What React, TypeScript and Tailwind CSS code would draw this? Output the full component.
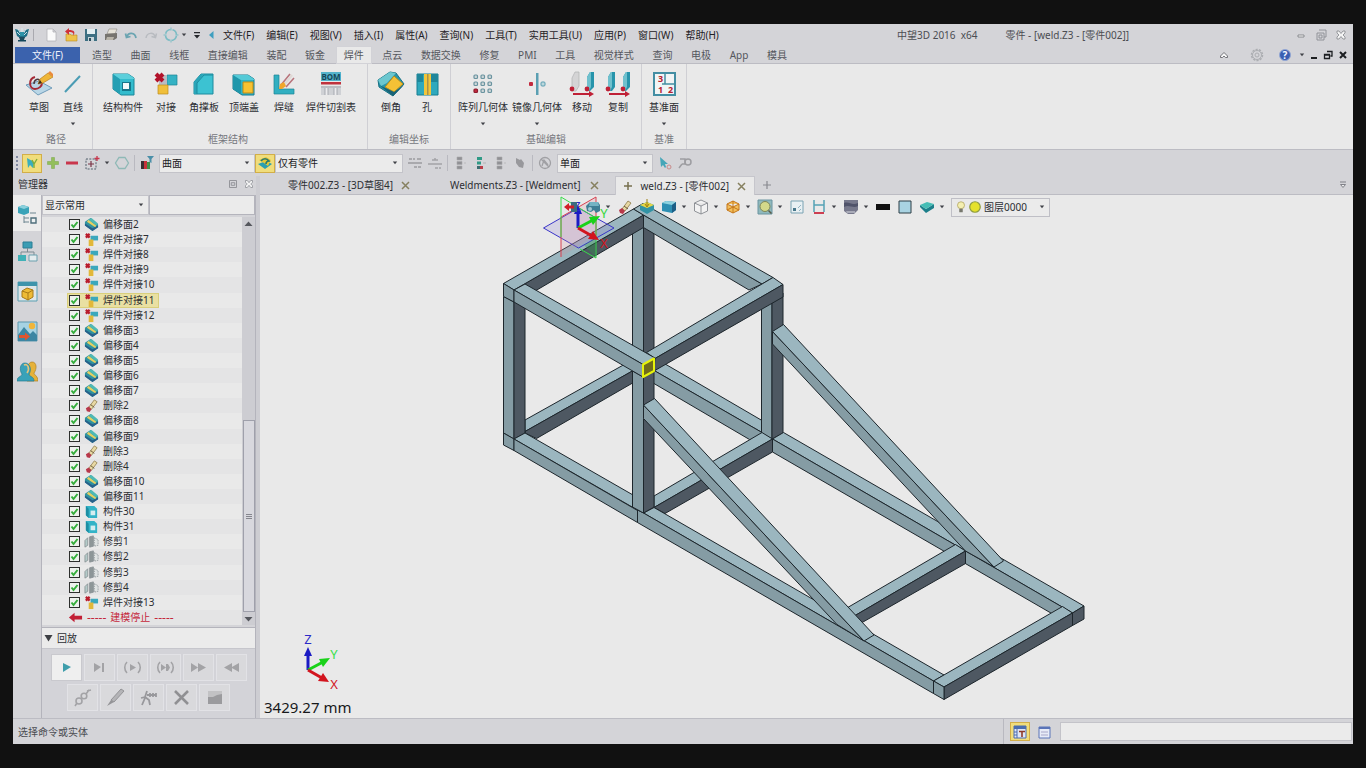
import { useState } from "react";
import type { ReactNode } from "react";
import clsx from "clsx";

type IconProps = { name: string; className?: string };

const light = "#9bb6bf";
const mid = "#859ca4";
const dark = "#4e5862";

/* 16 x 16 icons */

const icons: Record<string, ReactNode> = {
  logo: (
    <g>
      <path d="M1 2l4 1 3 5 3-5 4-1-2 7-3 2H6L3 9z" fill="#1f6f86" />
      <path d="M4 2l4 7 4-7M8 1v5M3 5l3 3M13 5l-3 3" stroke="#d9eef2" strokeWidth="0.900" fill="none" />
      <path d="M4 13h8v1.500H4z" fill="#12465a" />
      <path d="M5 10h6l-1 3H6z" fill="#1d4c5e" />
      <path d="M6 5h4v4H6z" fill="#2d93a8" />
    </g>
  ),
  newFile: <path d="M4 2h6l3 3v9H4zM10 2v3h3" fill="#fafafa" stroke="#b3b3b8" strokeWidth="0.800" />,
  open: (
    <g>
      <path d="M3 7h4l1 1h6v6H3z" fill="#edc24a" stroke="#b98a22" strokeWidth="0.600" />
      <path d="M10 9c1-3 0-4-4-4V8L2 4.500 6 1v2c5 0 7 2 4 6z" fill="#cf3038" />
    </g>
  ),
  save: (
    <g>
      <path d="M2 2h12v12H2z" fill="#3d6f82" />
      <path d="M4 2h8v5H4z" fill="#e3eef1" />
      <path d="M5 10h6v4H5z" fill="#c7d5da" />
      <path d="M6 11h2v3H6z" fill="#2d4f5e" />
    </g>
  ),
  print: (
    <g>
      <path d="M6 2h8l-2 5H4z" fill="#e6e2d8" stroke="#8a8780" strokeWidth="0.600" />
      <path d="M2 7l12-1v5l-3 2H2z" fill="#77746f" />
      <path d="M4 10h7l-1 3H3z" fill="#b9b4a9" />
    </g>
  ),
  undo: <path d="M4 10c1-5 8-5 9 1M2.500 6.500l1 4 4-1" fill="none" stroke="#6aa4b1" strokeWidth="1.800" />,
  redo: <path d="M12 10C11 5 4 5 3 11M13.500 6.500l-1 4-4-1" fill="none" stroke="#b8bbc0" strokeWidth="1.500" />,
  target: (
    <g fill="none" stroke="#7bbcc4" strokeWidth="1.600">
      <circle cx="8" cy="8" r="5.500" strokeDasharray="6.600 2" strokeDashoffset="-1" />
      <path d="M8 0.500v3M8 12.500v3M0.500 8h3M12.500 8h3" strokeWidth="1" />
    </g>
  ),
  barDown: <path d="M5 5h6v1.200H5zM5 8h6l-3 3.500z" fill="#26282c" />,
  left: <path d="M10.500 4v8L6 8z" fill="#3f9fc0" />,
  pick: (
    <g>
      <path d="M3 3l1 10 2-3 3 3 1-6z" fill="#39aebd" />
      <path d="M8 5l2 4 3-5M10 9v4" stroke="#7fae3a" fill="none" strokeWidth="1.400" />
    </g>
  ),
  plus: <path d="M6.500 2.500h3v4h4v3h-4v4h-3v-4h-4v-3h4z" fill="#93bf5b" stroke="#78a446" strokeWidth="0.500" />,
  minus: <path d="M2 6.500h12v3H2z" fill="#c9364c" />,
  marquee: (
    <g fill="none">
      <path d="M2 4h10v10H2z" stroke="#53606c" strokeWidth="1" strokeDasharray="2 1.300" />
      <path d="M7 6v6M4 9h6" stroke="#7a3345" strokeWidth="1.200" />
      <path d="M13 1v5M10.500 3.500h5" stroke="#c9364c" strokeWidth="1.300" />
    </g>
  ),
  hexagon: <path d="M5 2.500h6L14.500 8 11 13.500H5L1.500 8z" fill="none" stroke="#8fb9b6" strokeWidth="1.300" />,
  filter: (
    <g>
      <path d="M2 6h3v8H2z" fill="#3a2f33" />
      <path d="M5 6h3v8H5z" fill="#c8323a" />
      <path d="M8 7h3v7H8z" fill="#3f8e48" />
      <path d="M8 1h7l-2.500 3v4l-2-1V4z" fill="#4a8fa8" />
    </g>
  ),
  layers: (
    <g>
      <path d="M1 9l8-3 6 3-7 5z" fill="#2a9fb0" />
      <path d="M2 5l7-3 5 3-3 6-4-3z" fill="#e4c636" />
      <path d="M4 6c2-3 6-3 8 0-2 0-3 1-3 3" fill="none" stroke="#2c7b6e" strokeWidth="1.600" />
    </g>
  ),
  link: (
    <g fill="none" stroke="#9a9a9e" strokeWidth="1.400">
      <path d="M2 4h3M6 4h2M10 4h4M1 8h14M7 12h3M11 12h3" />
    </g>
  ),
  link2: <path d="M5 5h6M1 9h14M8 13h3M12 13h2M8 3v2" fill="none" stroke="#a2a2a6" strokeWidth="1.500" />,
  listGray: <path d="M5 2h5v3H5zM5 6.500h5v3H5zM5 11h5v3H5zM12 8h2" fill="#909094" stroke="#a8a8ac" strokeWidth="0.600" />,
  listTeal: (
    <g>
      <path d="M5 2h5v3H5zM5 6.500h4v3H5z" fill="#2f9a86" />
      <path d="M5 11h5v3H5z" fill="#3c6c70" />
      <path d="M8 11h3v3H8z" fill="#b83c48" />
      <path d="M11 8h3" stroke="#b0b0b4" />
    </g>
  ),
  hand: <path d="M4 3l4 2 1-1 3 4-1 5-4-1-3-4z" fill="#98989c" />,
  globe: (
    <g fill="none" stroke="#a0a0a4" strokeWidth="1.300">
      <circle cx="8" cy="8" r="5.500" />
      <path d="M4 4l8 8M5 11l2-6 4 5" />
    </g>
  ),
  cursor: (
    <g>
      <path d="M3 2l1 10 2-2 2 3 1-1-1-3h3z" fill="#46a6b8" />
      <circle cx="12" cy="12" r="2" fill="none" stroke="#c98a8a" />
    </g>
  ),
  cursorOff: (
    <g fill="none" stroke="#9d9da1" strokeWidth="1.500">
      <path d="M3 4h5v5H5M5 9l-3 4" />
      <circle cx="11" cy="7" r="3" />
    </g>
  ),
  offset: (
    <g>
      <path d="M1 5l6-4 8 7v3l-6 4-8-6z" fill="#2f93a0" />
      <path d="M1 9l8 6 6-4V9l-6 3-8-5z" fill="#28608a" />
      <path d="M3 5l9 6 1-2-8-6z" fill="#e4cf62" />
      <path d="M5 3l3-2 7 6-2 2z" fill="#4fb9b4" />
    </g>
  ),
  butt: (
    <g>
      <path d="M7 4h8v5H7z" fill="#3ba8bd" />
      <path d="M5 8h5v7H5z" fill="#e2b83a" />
      <path d="M2 2l4 4M6 2L2 6" stroke="#b91c2c" strokeWidth="2.400" />
    </g>
  ),
  erase: (
    <g>
      <path d="M5 10l6-8 3 2-6 8z" fill="#e8d9a4" stroke="#8c7a45" strokeWidth="0.800" />
      <path d="M2 11l3-2 3 3-2 3-3-1z" fill="#b8384a" />
      <path d="M7 7l4 3" stroke="#6a5a3a" />
    </g>
  ),
  member: (
    <g>
      <path d="M2 2h9l3 3v10H5l-3-3z" fill="#33b3c7" />
      <path d="M2 2l3 3v10l-3-3z" fill="#1c8ea3" />
      <path d="M7 7h5v5H7z" fill="#d5eef0" />
    </g>
  ),
  trim: (
    <g stroke="#8a9296" strokeWidth="0.900">
      <path d="M1 7l3-3v8l-3 2z" fill="#b4cbc9" />
      <path d="M6 3l4-1v11l-4 1z" fill="#8d9698" />
      <path d="M11 4l4 2v6l-4 1z" fill="#dfe3e3" strokeDasharray="1.500 1" />
    </g>
  ),
  stop: <path d="M1 8l6-5v3h8v4H7v3z" fill="#c21f35" />,
  exit: (
    <g>
      <path d="M8 3h6v10H8z" fill="#3c6c80" />
      <path d="M1 8l5-4v2.500h5v3H6V12z" fill="#d11f28" />
    </g>
  ),
  binocular: (
    <g>
      <path d="M1 7l4-4h8l2 3v6l-4 2-2-3-3 2-4-1z" fill="#3d7f95" />
      <path d="M5 3h8l1 4H4z" fill="#73b4c4" />
      <circle cx="5" cy="10" r="2" fill="#a3c9d2" />
    </g>
  ),
  extrude: (
    <g>
      <path d="M1 6l7-3 7 3v5l-7 4-7-4z" fill="#3193a5" />
      <path d="M1 6l7-3 7 3-7 3z" fill="#e6d748" />
      <path d="M8 0v7M6 5l2 3 2-3" stroke="#9c7f10" fill="none" />
    </g>
  ),
  shaded: (
    <g>
      <path d="M1 4l4-2 10 1v8l-4 3-10-2z" fill="#2d8fb3" />
      <path d="M1 4l4-2 10 1-4 3z" fill="#8fd3e0" />
      <path d="M11 6l4-3v8l-4 3z" fill="#1d5f86" />
    </g>
  ),
  wire: <path d="M8 1l6.500 3v8L8 15l-6.500-3V4zM1.500 4L8 7l6.500-3M8 7v8" fill="#f2f2f2" stroke="#85888d" strokeWidth="0.900" />,
  orangeBox: (
    <path d="M8 2l6 3v6l-6 3-6-3V5zM2 5l6 3 6-3M8 2v12M2 11l6-3 6 3" fill="#f3bf5c" stroke="#c4761a" strokeWidth="1" />
  ),
  zoomFit: (
    <g>
      <path d="M1 1h14v14H1z" fill="#8fb9bd" stroke="#6a94a0" />
      <circle cx="8" cy="7.500" r="5" fill="#d3d98a" stroke="#7d8558" />
      <path d="M11.500 11.500l3 3" stroke="#5a5c4a" strokeWidth="1.500" />
    </g>
  ),
  corner: (
    <g>
      <path d="M2 2h12v12H2z" fill="#e8f0f3" stroke="#7aa3b3" />
      <path d="M4 9h3v3H4z" fill="#48788c" />
      <path d="M9 9l3-3M10 12l2-2" stroke="#93b5c2" />
    </g>
  ),
  section: (
    <g>
      <path d="M3 1v12M13 1v12M3 6h10" stroke="#55a2b5" strokeWidth="1.500" />
      <path d="M3 13h10v2H3z" fill="#cc3f52" />
    </g>
  ),
  monitor: (
    <g>
      <path d="M1 1h14v10l-4 4H5l-4-3z" fill="#77798c" />
      <path d="M1 4c5-2 8 3 14 0v3c-5 3-9-2-14 1z" fill="#50536a" />
      <path d="M3 12h9v2H4z" fill="#a9abb8" />
    </g>
  ),
  black: <path d="M1 5h14v6H1z" fill="#111" />,
  blueBox: <path d="M2 2h12v12H2z" fill="#a9d3e2" stroke="#2c3e46" strokeWidth="1" />,
  sheets: (
    <g>
      <path d="M1 8l6 6 8-5V5L7 10 1 6z" fill="#1c7f8a" />
      <path d="M1 6l7-3 7 2-8 5z" fill="#45bdb5" />
    </g>
  ),
  bulb: (
    <g>
      <circle cx="8" cy="6" r="4" fill="#f4efb0" stroke="#a99b52" strokeWidth="0.800" />
      <path d="M6 10h4v4H6z" fill="#77786e" />
    </g>
  ),
  layerDot: <circle cx="8" cy="8" r="6" fill="#e5e12c" stroke="#8f9c42" strokeWidth="1.400" />,
  textPanel: (
    <g>
      <path d="M2 2h12v12H2z" fill="#dfe6f4" stroke="#4a6db0" />
      <path d="M2 2h12v3H2z" fill="#4a6db0" />
      <path d="M5 5v9M2 8h3M2 11h3" stroke="#4a6db0" />
      <path d="M7 7.500h6M10 7v6" stroke="#8e3a2a" strokeWidth="1.600" />
    </g>
  ),
  panel: (
    <g>
      <path d="M3 3h11v11H3z" fill="#e7ebf7" stroke="#5a74b8" />
      <path d="M3 3h11v2H3z" fill="#5a74b8" />
      <path d="M5 8h7M5 11h7" stroke="#a8a7c9" />
    </g>
  ),
  minWin: <path d="M5 8h6v2H5z" fill="#f4f4f4" stroke="#77797f" strokeWidth="0.800" />,
  restoreWin: <path d="M6 3h7v7h-2M4 6h7v7H4zM6 8h3v3H6z" fill="none" stroke="#8b8d93" strokeWidth="0.900" />,
  closeWin: <path d="M4 4h2l2 2.500L10 4h2v2l-2 2 2 2v2h-2L8 9.500 6 12H4v-2l2-2-2-2z" fill="#f4f4f4" stroke="#84868c" strokeWidth="0.800" />,
  pinWin: <path d="M4 4h8v8H4zM6 6.500h4v3H6z" fill="none" stroke="#8b8d92" strokeWidth="1" />,
  minDoc: <path d="M5 10h6v2H5z" fill="#1d1f22" />,
  restoreDoc: <path d="M7 4.500h5V9h-1.500M4.500 7.500h5v4h-5zM4 8h6" fill="none" stroke="#1d1f22" strokeWidth="1.300" />,
  closeDoc: <path d="M5 5l6 6M11 5l-6 6" stroke="#1d1f22" strokeWidth="2" />,
  up: <path d="M4.500 9L8 5.500 11.500 9v1.500H9.500L8 9l-1.500 1.500h-2z" fill="#f6f6f6" stroke="#66686d" strokeWidth="0.900" />,
  gear: (
    <g fill="none" stroke="#acaeb2">
      <circle cx="8" cy="8" r="5.500" strokeWidth="1.500" strokeDasharray="2.200 1.200" />
      <circle cx="8" cy="8" r="4.500" />
      <circle cx="8" cy="8" r="2" />
    </g>
  ),
  help: (
    <g>
      <circle cx="8" cy="8" r="5.500" fill="#3a5fb2" stroke="#93a7d4" />
      <text x="8" y="11.500" textAnchor="middle" fontSize="10" fontWeight="700" fill="#f4f7ff">
        ?
      </text>
    </g>
  ),
};

function Icon({ name, className }: IconProps) {
  return (
    <svg viewBox="0 0 16 16" className={clsx("shrink-0", className ?? "h-4 w-4")} aria-hidden="true">
      {icons[name]}
    </svg>
  );
}

function Caret({ className }: { className?: string }) {
  return (
    <svg viewBox="0 0 6 4" className={clsx("h-1 w-1.5 shrink-0", className)} aria-hidden="true">
      <path d="M0.800 0.500h4.400L3 3.200z" fill="#404248" />
    </svg>
  );
}

/* 28 x 26 ribbon drawings */

const ribbonArt: Record<string, ReactNode> = {
  sketch: (
    <g>
      <path d="M1 14l13-4 13 7-14 7z" fill="#b9d6e6" stroke="#6f9cba" />
      <path d="M10 6c-7 2-6 12 0 12 4 0 7-3 7-6" fill="none" stroke="#a52a35" strokeWidth="2" />
      <path d="M9 13c0-5 5-6 6-3" fill="none" stroke="#4b3a40" strokeWidth="1.500" />
      <path d="M13 13l2-5 8-6 5 4-10 6z" fill="#efb637" stroke="#b77f1c" strokeWidth="0.700" />
      <path d="M23 2l5 4 0-3-3-3z" fill="#e98a3a" />
      <path d="M13 13l2-4 2 3z" fill="#3b2c1d" />
    </g>
  ),
  line: <path d="M6 21L21 5" stroke="#4a9cb4" strokeWidth="2" />,
  structure: (
    <g>
      <path d="M4 3h15l6 4v17H12l-8-6z" fill="#33bccd" stroke="#1b8799" />
      <path d="M4 3l7 5v15l-7-5z" fill="#249fb3" />
      <path d="M4 3h15l6 4v1H11z" fill="#5ccfdb" />
      <path d="M13 11h9v9h-9z" fill="#15788b" />
      <path d="M14 12h6v6h-6z" fill="#f0fbfb" />
    </g>
  ),
  butt: (
    <g>
      <path d="M15 4h10v10H15z" fill="#34b2c4" stroke="#1e8496" strokeWidth="0.700" />
      <path d="M7 4h8v10H7z" fill="#b9bcc2" />
      <path d="M6 14h10v9H6z" fill="#f0bf3a" stroke="#bd8c1f" strokeWidth="0.700" />
      <path d="M4 3l7 7M11 3l-7 7" stroke="#b2122a" strokeWidth="4" />
    </g>
  ),
  gusset: (
    <g>
      <path d="M4 11l7-8h12v20H4z" fill="#3cc2d2" stroke="#1c8b9e" />
      <path d="M4 11l7-8h3l-7 9v11H4z" fill="#2aa5b8" />
      <path d="M7 23V12l7-8h9" fill="none" stroke="#1c8b9e" />
    </g>
  ),
  cap: (
    <g>
      <path d="M3 4h15l6 4v16H12l-9-6z" fill="#2db3c6" stroke="#187d90" />
      <path d="M3 4l8 5v14l-8-5z" fill="#1f97ab" />
      <path d="M3 4h15l6 4v1H11z" fill="#55cad7" />
      <path d="M13 11h10v11H13z" fill="#f7c231" stroke="#c08b17" />
    </g>
  ),
  weld: (
    <g>
      <path d="M4 4h5v14h15v5H4z" fill="#31afc1" stroke="#1d8597" strokeWidth="0.700" />
      <path d="M11 14l9-11M16 16l8-9" stroke="#b8747c" strokeWidth="1.600" />
      <path d="M14 14l8-10" stroke="#dfd9d6" strokeWidth="2.400" />
      <path d="M9 18l1-5 4-2 2 4-4 3z" fill="#f0a62b" />
    </g>
  ),
  bom: (
    <g>
      <path d="M4 1h20v9H4z" fill="#55b3cb" />
      <text x="14" y="9" textAnchor="middle" fontSize="8" fontWeight="700" fill="#14475a">
        BOM
      </text>
      <path d="M4 11h20v2.500H4z" fill="#c0323d" />
      <path d="M4 15h20v9H4z" fill="#cfd1d5" />
      <path d="M8 17h3v7H8zM17 17h3v7h-3z" fill="#ececee" />
      <path d="M4 16h20M8 17v7M11 17v7M17 17v7M20 17v7" stroke="#a2a5aa" strokeWidth="0.900" />
    </g>
  ),
  chamfer: (
    <g>
      <path d="M1 9L13 1l6 1 8 11-11 12-14-9z" fill="#2796ac" stroke="#1a7183" />
      <path d="M1 9l12-8 6 1-9 10-6 3z" fill="#6cc7cf" />
      <path d="M17 5l9 8-9 8-9-5z" fill="#f4c136" stroke="#b58d1c" />
      <path d="M2 14l14 11 11-11-10 7z" fill="#1a6376" />
    </g>
  ),
  hole: (
    <g>
      <path d="M4 3h21v21H4z" fill="#2fa9bd" stroke="#177e92" />
      <path d="M4 3h6v8H4zM18 3h7v8h-7z" fill="#1f879b" />
      <path d="M11 3h7v21h-7z" fill="#f2c53a" />
      <path d="M14 3h1.500v21H14z" fill="#a8924a" />
    </g>
  ),
  pattern: (
    <g fill="#cfd6d8" stroke="#6a94a0" strokeWidth="1.200">
      {[4, 11, 18].map((y) =>
        [5, 12, 19].map((x) => (
          <rect
            key={`${x}-${y}`}
            x={x}
            y={y}
            width="3.500"
            height="3.500"
            rx="1"
            fill={x === 5 && y === 18 ? "#c22a3e" : undefined}
            stroke={x === 5 && y === 18 ? "#8c1c2e" : undefined}
          />
        )),
      )}
    </g>
  ),
  mirror: (
    <g>
      <path d="M13 2h2.500v22H13z" fill="#5a9fb2" />
      <rect x="6" y="11" width="4" height="4" rx="1" fill="#c22a3e" />
      <rect x="18" y="11" width="4" height="4" rx="1" fill="#bcd7dc" stroke="#5a9fb2" />
    </g>
  ),
  move: (
    <g>
      <path d="M4 7l3-6h4v14l-3 5H4z" fill="#d4d4d5" stroke="#b0b1b3" strokeWidth="0.700" />
      <path d="M19 6l3-5h4v15l-4 4h-3z" fill="#2794ab" />
      <path d="M19 6l3-5h1v15l-2 4h-2z" fill="#6fc0cd" />
      <circle cx="4" cy="18" r="2.400" fill="#bf2036" />
      <circle cx="19" cy="18" r="2.400" fill="#bf2036" />
      <path d="M5 22h16v-2l5 3-5 3v-2H5z" fill="#bf2036" />
    </g>
  ),
  copy: (
    <g>
      <path d="M4 6l3-5h4v15l-3 4H4zM19 6l3-5h4v15l-4 4h-3z" fill="#2794ab" />
      <path d="M4 6l3-5h1v15l-2 4H4zM19 6l3-5h1v15l-2 4h-2z" fill="#6fc0cd" />
      <circle cx="4" cy="18" r="2.400" fill="#bf2036" />
      <circle cx="19" cy="18" r="2.400" fill="#bf2036" />
      <path d="M5 22h16v-2l5 3-5 3v-2H5z" fill="#bf2036" />
    </g>
  ),
  datum: (
    <g>
      <path d="M4 2h21v22H4z" fill="#f1f4f5" stroke="#438ea3" strokeWidth="2" />
      <path d="M15 3v10h9M15 13h-3" stroke="#438ea3" strokeWidth="1.500" fill="none" />
      <text fontSize="9" fontWeight="700" fill="#b5202f">
        <tspan x="8" y="11">3</tspan>
        <tspan x="8" y="22">1</tspan>
        <tspan x="18" y="22">2</tspan>
      </text>
    </g>
  ),
};

const quickIcons = ["newFile", "open", "save", "print", "undo", "redo", "target"];

const menus = [
  "文件(F)",
  "编辑(E)",
  "视图(V)",
  "插入(I)",
  "属性(A)",
  "查询(N)",
  "工具(T)",
  "实用工具(U)",
  "应用(P)",
  "窗口(W)",
  "帮助(H)",
];

const ribbonTabs = [
  "造型",
  "曲面",
  "线框",
  "直接编辑",
  "装配",
  "钣金",
  "焊件",
  "点云",
  "数据交换",
  "修复",
  "PMI",
  "工具",
  "视觉样式",
  "查询",
  "电极",
  "App",
  "模具",
];

const ribbonGroups = [
  {
    title: "路径",
    pad: "pl-[9px] pr-0.5",
    tools: [
      { label: "草图", art: "sketch", width: "w-[34px]" },
      { label: "直线", art: "line", width: "w-[34px]", more: true },
    ],
  },
  {
    title: "框架结构",
    pad: "pl-[5px] pr-[9px]",
    tools: [
      { label: "结构构件", art: "structure", width: "w-[50px]" },
      { label: "对接", art: "butt", width: "w-9" },
      { label: "角撑板", art: "gusset", width: "w-10" },
      { label: "顶端盖", art: "cap", width: "w-10" },
      { label: "焊缝", art: "weld", width: "w-10" },
      { label: "焊件切割表", art: "bom", width: "w-[54px]" },
    ],
  },
  {
    title: "编辑坐标",
    pad: "px-[5px]",
    tools: [
      { label: "倒角", art: "chamfer", width: "w-9" },
      { label: "孔", art: "hole", width: "w-9" },
    ],
  },
  {
    title: "基础编辑",
    pad: "px-[5px]",
    tools: [
      { label: "阵列几何体", art: "pattern", width: "w-[54px]", more: true },
      { label: "镜像几何体", art: "mirror", width: "w-[54px]", more: true },
      { label: "移动", art: "move", width: "w-9" },
      { label: "复制", art: "copy", width: "w-9" },
    ],
  },
  {
    title: "基准",
    pad: "px-[5px]",
    tools: [{ label: "基准面", art: "datum", width: "w-[34px]", more: true }],
  },
];

const history = [
  { label: "偏移面2", icon: "offset" },
  { label: "焊件对接7", icon: "butt" },
  { label: "焊件对接8", icon: "butt" },
  { label: "焊件对接9", icon: "butt" },
  { label: "焊件对接10", icon: "butt" },
  { label: "焊件对接11", icon: "butt", active: true },
  { label: "焊件对接12", icon: "butt" },
  { label: "偏移面3", icon: "offset" },
  { label: "偏移面4", icon: "offset" },
  { label: "偏移面5", icon: "offset" },
  { label: "偏移面6", icon: "offset" },
  { label: "偏移面7", icon: "offset" },
  { label: "删除2", icon: "erase" },
  { label: "偏移面8", icon: "offset" },
  { label: "偏移面9", icon: "offset" },
  { label: "删除3", icon: "erase" },
  { label: "删除4", icon: "erase" },
  { label: "偏移面10", icon: "offset" },
  { label: "偏移面11", icon: "offset" },
  { label: "构件30", icon: "member" },
  { label: "构件31", icon: "member" },
  { label: "修剪1", icon: "trim" },
  { label: "修剪2", icon: "trim" },
  { label: "修剪3", icon: "trim" },
  { label: "修剪4", icon: "trim" },
  { label: "焊件对接13", icon: "butt" },
];

const viewTools = [
  { icon: "exit" },
  { icon: "binocular", more: true },
  { icon: "erase" },
  { icon: "extrude" },
  { icon: "shaded", more: true },
  { icon: "wire", more: true },
  { icon: "orangeBox", more: true },
  { icon: "zoomFit", more: true },
  { icon: "corner" },
  { icon: "section", more: true },
  { icon: "monitor", more: true },
  { icon: "black" },
  { icon: "blueBox" },
  { icon: "sheets", more: true },
];

function IconButton({ name, className }: IconProps) {
  return (
    <button type="button" aria-label={name} className={clsx("flex shrink-0 items-center justify-center", className)}>
      <Icon name={name} />
    </button>
  );
}

function Dropdown({ label, value, className }: { label: string; value: string; className?: string }) {
  return (
    <div className={clsx("relative shrink-0 border border-[#c3c3c9] bg-[#ebebeb]", className)}>
      <select aria-label={label} className="block h-full w-full appearance-none bg-transparent pr-4 pl-0.5 outline-none">
        <option>{value}</option>
      </select>
      <Caret className="pointer-events-none absolute top-1/2 right-1 -translate-y-1/2" />
    </div>
  );
}

function Separator() {
  return <span className="h-4 w-px shrink-0 bg-[#b9b9c0]" />;
}

function MenuBar() {
  return (
    <header className="flex h-[22px] shrink-0 items-center pl-px text-[#1f2125]">
      <Icon name="logo" />
      <span className="mx-[3px] h-3 w-px bg-[#a9a9af]" />
      <div className="ml-1.5 flex items-center gap-1">
        {quickIcons.map((name) => (
          <IconButton key={name} name={name} />
        ))}
      </div>
      <Caret className="ml-0.5" />
      <IconButton name="barDown" className="ml-0.5" />
      <IconButton name="left" className="w-3" />
      <nav className="ml-1.5 flex items-center gap-3">
        {menus.map((menu) => (
          <button key={menu} type="button" className="whitespace-nowrap">
            {menu}
          </button>
        ))}
      </nav>
      <div className="mr-[164px] ml-auto flex gap-7 whitespace-nowrap text-[#4b4d52]">
        <span className="whitespace-pre">中望3D 2016  x64</span>
        <h1>零件 - [weld.Z3 - [零件002]]</h1>
      </div>
      <div className="flex items-center gap-1 pr-1">
        <IconButton name="minWin" />
        <IconButton name="restoreWin" />
        <IconButton name="closeWin" />
      </div>
    </header>
  );
}

function RibbonTabs() {
  return (
    <div className="flex h-[18px] shrink-0 border-b border-[#bcbcc3] pl-0.5">
      <button type="button" className="mt-px w-[65px] bg-[#3b62ad] text-[#eef2fb]">
        文件(F)
      </button>
      <nav className="ml-1 flex w-[711px] justify-between text-[#55575d]">
        {ribbonTabs.map((tab) => (
          <button
            key={tab}
            type="button"
            className={clsx(
              "px-2 whitespace-nowrap",
              tab === "焊件" && "-mb-px bg-[#e9e9e9] inset-ring inset-ring-[#d2d2d7]",
            )}
          >
            {tab}
          </button>
        ))}
      </nav>
      <div className="ml-auto flex items-center pr-0.5">
        <IconButton name="up" className="mr-[17px]" />
        <IconButton name="gear" className="mr-3" />
        <IconButton name="help" className="mr-1.5" />
        <Caret className="mr-0.5" />
        <IconButton name="minDoc" className="w-3.5" />
        <IconButton name="restoreDoc" className="w-3.5" />
        <IconButton name="closeDoc" />
      </div>
    </div>
  );
}

function Ribbon() {
  return (
    <div className="flex h-[86px] shrink-0 border-b border-[#bcbcc3] bg-[#e9e9e9]">
      {ribbonGroups.map((group) => (
        <section
          key={group.title}
          aria-label={group.title}
          className={clsx("flex flex-col justify-between border-r border-[#cfcfd4] pt-[7px] pb-[3px]", group.pad)}
        >
          <div className="flex">
            {group.tools.map((tool) => (
              <button
                key={tool.label}
                type="button"
                className={clsx("flex flex-col items-center whitespace-nowrap text-[#2c2e33]", tool.width)}
              >
                <svg viewBox="0 0 28 26" className="h-[26px] w-7" aria-hidden="true">
                  {ribbonArt[tool.art]}
                </svg>
                <span className="mt-[3px]">{tool.label}</span>
                {tool.more && <Caret className="mt-2" />}
              </button>
            ))}
          </div>
          <p className="text-center text-[#75777d]">{group.title}</p>
        </section>
      ))}
    </div>
  );
}

function SelectionBar() {
  return (
    <div className="flex h-[26px] shrink-0 items-center gap-1 pl-[3px] text-[#1b1c1f]">
      <span className="h-3.5 w-0.5 border-l-2 border-dotted border-[#8088a0]" />
      <IconButton name="pick" className="h-[19px] w-5 border border-[#d2ae48] bg-[#f0dd7c]" />
      <IconButton name="plus" className="w-3.5" />
      <IconButton name="minus" />
      <IconButton name="marquee" />
      <Caret />
      <IconButton name="hexagon" />
      <Separator />
      <IconButton name="filter" />
      <div className="flex">
        <Dropdown label="过滤器" value="曲面" className="h-[19px] w-24" />
        <IconButton name="layers" className="h-[19px] w-5 border border-[#d2ae48] bg-[#f0dd7c]" />
        <Dropdown label="范围" value="仅有零件" className="h-[19px] w-32" />
      </div>
      <IconButton name="link" />
      <IconButton name="link2" />
      <Separator />
      <IconButton name="listGray" />
      <IconButton name="listTeal" />
      <IconButton name="listGray" />
      <IconButton name="hand" />
      <Separator />
      <IconButton name="globe" />
      <Dropdown label="拾取策略" value="单面" className="h-[19px] w-24" />
      <IconButton name="cursor" />
      <IconButton name="cursorOff" />
    </div>
  );
}

/* Left dock */

const dockArt: Record<string, ReactNode> = {
  历史: (
    <g>
      <path d="M1 4l5-2 6 2v6l-5 2-6-2z" fill="#3aa3b8" />
      <path d="M1 4l5-2 6 2-5 2z" fill="#8ad0dc" />
      <path d="M7 13v7M7 15h5M7 19h5M13 10h6" stroke="#6c8590" fill="none" />
      <path d="M14 15h5v5h-5z" fill="#eef1f2" stroke="#4f6f7c" strokeWidth="1.400" />
    </g>
  ),
  装配: (
    <g>
      <path d="M6 1h9v6H6z" fill="#3a9db4" stroke="#2b7f95" />
      <path d="M10.500 7v4M4 14v-3h13v3" stroke="#7c8b92" fill="none" />
      <path d="M1 14h8v6H1z" fill="#3fb1b7" />
      <path d="M12 14h8v6h-8z" fill="#e4ecee" stroke="#6aa0ae" />
    </g>
  ),
  视图: (
    <g>
      <path d="M1 1h19v19H1z" fill="#dfe6e8" stroke="#5ba0b3" />
      <path d="M1 1h19v4H1z" fill="#3e94ab" />
      <path d="M5 10l5-3 6 2v7l-5 3-6-3z" fill="#eebb36" stroke="#a87a18" />
      <path d="M5 10l6 2 5-3M11 12v7" fill="none" stroke="#a87a18" />
    </g>
  ),
  视觉: (
    <g>
      <path d="M1 1h19v19H1z" fill="#a6d3e3" stroke="#5d97ad" />
      <path d="M1 14l6-8 6 7 3-3 4 4v6H1z" fill="#3c86a3" />
      <circle cx="15" cy="5" r="3.200" fill="#f0b53a" />
      <path d="M2 14h6v-2.500l5 4-5 4V17H2z" fill="#e0552f" />
    </g>
  ),
  角色: (
    <g>
      <path d="M10 20c0-4 3-5 2-7-4-4-1-12 3-12 5 0 5 7 2 11 0 2 4 3 4 8z" fill="#e6b23a" stroke="#b0801e" strokeWidth="0.700" />
      <path d="M0 20c0-5 5-4 5-7C2 9 3 2 8 2s7 7 4 11c0 3 5 2 5 7z" fill="#39a2b9" stroke="#227c92" strokeWidth="0.700" />
      <path d="M7 4c4-2 6 4 3 8" stroke="#e6c37a" strokeWidth="1.600" fill="none" />
    </g>
  ),
};

const playbackArt: Record<string, ReactNode> = {
  播放: <path d="M6 5l8 4-8 5z" fill="#3f9eab" />,
  下一步: <path d="M4 5l7 4-7 5zM12 5h2v9h-2z" fill="#a3a3a6" />,
  播放到: (
    <g>
      <path d="M7 6l6 3.500L7 13z" fill="#a3a3a6" />
      <path d="M4 4c-3 3-3 8 0 11M15 4c3 3 3 8 0 11" stroke="#a3a3a6" strokeWidth="1.600" fill="none" />
    </g>
  ),
  跳到: (
    <g>
      <path d="M5 6l5 3.500L5 13zM10 6h2l2 3.500L12 13h-2z" fill="#a3a3a6" />
      <path d="M4 4c-3 3-3 8 0 11M15 4c3 3 3 8 0 11" stroke="#a3a3a6" strokeWidth="1.600" fill="none" />
    </g>
  ),
  快进: <path d="M2 5l7 4.500L2 14zM9 5l8 4.500L9 14z" fill="#a3a3a6" />,
  快退: <path d="M10 5v9L2 9.500zM17 5v9L9 9.500z" fill="#a3a3a6" />,
  重定义: (
    <g fill="none" stroke="#a3a3a6" strokeWidth="1.600">
      <circle cx="6" cy="13" r="3" />
      <circle cx="11" cy="8" r="2.800" />
      <path d="M2 18l2-3M13 6l3-4M14 3l4-1" />
    </g>
  ),
  编辑: (
    <g>
      <path d="M5 12L15 1l3 2L8 14z" fill="#b4b4b7" stroke="#949497" />
      <path d="M1 18l4-6 3 2z" fill="#949497" />
    </g>
  ),
  抑制: <path d="M8 3L6 9l-4 1M6 9l4 3 1 5M6 10l-3 7M8 7h9M11 5v4M14 5v4M17 5v4" stroke="#98989c" strokeWidth="1.800" fill="none" />,
  删除: <path d="M3 3l13 13M16 3L3 16" stroke="#909093" strokeWidth="2.600" />,
  隐藏: (
    <g>
      <path d="M3 3h14v13H3z" fill="#9b9b9e" />
      <path d="M3 3h14v3l-5 1-4 2H3z" fill="#c2c2c4" />
    </g>
  ),
};

const playbackRows = [
  ["播放", "下一步", "播放到", "跳到", "快进", "快退"],
  ["重定义", "编辑", "抑制", "删除", "隐藏"],
];

function HistoryTree() {
  const [off, setOff] = useState<string[]>([]);

  const toggle = (label: string) =>
    setOff((prev) => (prev.includes(label) ? prev.filter((item) => item !== label) : [...prev, label]));

  return (
    <div className="mt-0.5 flex min-h-0 flex-1">
      <ul className="flex flex-1 flex-col bg-[#e9e9e9]">
        {history.map((item) => (
          <li key={item.label} className="flex flex-1 items-center pl-[25px] odd:bg-[#e4e4e5]">
            <label
              className={clsx(
                "flex items-center gap-1 border px-px pr-1 leading-[13px]",
                item.active ? "border-[#d9cf7c] bg-[#e9e0a2]" : "border-transparent",
              )}
            >
              <span className="relative block h-[11px] w-[11px]">
                <input
                  type="checkbox"
                  checked={!off.includes(item.label)}
                  onChange={() => toggle(item.label)}
                  className="peer block h-[11px] w-[11px] appearance-none border border-[#2d2f2d] bg-[#eef2ee]"
                />
                <svg
                  viewBox="0 0 11 11"
                  className="pointer-events-none absolute inset-0 hidden h-[11px] w-[11px] peer-checked:block"
                  aria-hidden="true"
                >
                  <path d="M2.500 5.500l2 2.500 4-5" fill="none" stroke="#35ae3c" strokeWidth="2" />
                </svg>
              </span>
              <Icon name={item.icon} className="-my-px h-[15px] w-[15px]" />
              {item.label}
            </label>
          </li>
        ))}
        <li className="flex flex-1 items-center gap-1 pl-[26px] leading-[13px] text-[#c4283c] odd:bg-[#e4e4e5]">
          <Icon name="stop" className="h-[15px] w-[15px]" />
          <span className="text-xs leading-[13px]">-----</span>
          建模停止
          <span className="text-xs leading-[13px]">-----</span>
        </li>
      </ul>

      {/* Scrollbar */}

      <div className="flex w-[13px] flex-col items-center bg-[#cdcdd2]">
        <svg viewBox="0 0 13 13" className="h-[13px] w-[13px]" aria-hidden="true">
          <path d="M2.500 9h8L6.500 4.500z" fill="#55575d" />
        </svg>
        <div className="flex-1" />
        <div className="flex h-[47%] w-3 flex-col items-center justify-center gap-px border border-[#9fa0ab] bg-[#d8d8de]">
          <span className="h-px w-1.5 bg-[#85868e]" />
          <span className="h-px w-1.5 bg-[#85868e]" />
          <span className="h-px w-1.5 bg-[#85868e]" />
        </div>
        <svg viewBox="0 0 13 13" className="h-[13px] w-[13px]" aria-hidden="true">
          <path d="M2.500 5h8l-4 4.500z" fill="#55575d" />
        </svg>
      </div>
    </div>
  );
}

function Manager() {
  return (
    <aside className="flex w-[247px] shrink-0 flex-col border-r-4 border-[#cdcdd2]">
      <div className="flex h-[19px] shrink-0 items-center pb-1 pl-[5px] text-[#303237]">
        <h2 className="flex-1">管理器</h2>
        <Icon name="pinWin" className="h-3.5 w-3.5" />
        <Icon name="closeWin" className="ml-0.5 h-3.5 w-3.5" />
      </div>
      <div className="flex min-h-0 flex-1">
        <div className="flex w-7 shrink-0 flex-col">
          {Object.keys(dockArt).map((name, index) => (
            <button
              key={name}
              type="button"
              aria-label={name}
              className={clsx(
                "flex items-center justify-center",
                index === 0 ? "h-9 bg-[#ececec]" : "h-10",
              )}
            >
              <svg viewBox="0 0 21 21" className="h-[21px] w-[21px]" aria-hidden="true">
                {dockArt[name]}
              </svg>
            </button>
          ))}
        </div>
        <div className="flex min-w-0 flex-1 flex-col border-x border-[#b4b4bc] text-[#2c2e33]">
          <div className="flex h-5 shrink-0">
            <Dropdown label="显示" value="显示常用" className="w-[107px]" />
            <input aria-label="搜索" className="min-w-0 flex-1 border border-[#b4b4bc] bg-[#ebebeb] px-1 outline-none" />
          </div>
          <HistoryTree />
          <div className="mt-0.5 flex h-[21px] shrink-0 items-center gap-1 border-t border-[#b4b4bc] bg-[#ebebeb] pl-0.5">
            <svg viewBox="0 0 9 8" className="h-2 w-[9px]" aria-hidden="true">
              <path d="M0.500 1h8l-4 6.500z" fill="#3d3f44" />
            </svg>
            <h3>回放</h3>
          </div>
          <div className="flex flex-col items-center gap-[3px] border-t border-[#c6c6cc] bg-[#d3d3d8] pt-[5px] pb-[7px]">
            {playbackRows.map((row) => (
              <div key={row[0]} className="flex gap-0.5">
                {row.map((name) => (
                  <button
                    key={name}
                    type="button"
                    aria-label={name}
                    className={clsx(
                      "flex h-[27px] w-[31px] items-center justify-center border",
                      name === "播放" ? "border-[#c9c9ce] bg-[#efefef]" : "border-[#e2e2e6] bg-[#d9d9dc]",
                    )}
                  >
                    <svg viewBox="0 0 19 19" className="h-[19px] w-[19px]" aria-hidden="true">
                      {playbackArt[name]}
                    </svg>
                  </button>
                ))}
              </div>
            ))}
          </div>
        </div>
      </div>
    </aside>
  );
}

/* Frame members, listed from the rear of the model to the front */

const faces = [
  // rear post
  { fill: mid, points: "632.5,222 643.5,228 643.5,360 632.5,360" },
  { fill: dark, points: "643.5,226 654,230 654,362 643.5,360" },
  // lower rear left
  { fill: light, points: "525,420 643,354 643,365 525,431.5" },
  { fill: dark, points: "525,431.5 643,365 643,377 536.5,438.5 525,433" },
  // lower rear right
  { fill: light, points: "648,354 762,420.500 762,432.5 648,367" },
  { fill: mid, points: "648,367 762,432.5 772,439 749.5,439.5 648,380" },
  // upper rear left
  { fill: dark, points: "514,290 643.5,215 643.5,227.5 530,294" },
  { fill: light, points: "503.5,283.5 633.5,209 643.5,215 514,290" },
  // upper rear right
  { fill: mid, points: "643.5,215 762,284 749,290 643.5,227.5" },
  { fill: light, points: "633.5,209 643,203.500 773,277.5 762,284 643.5,215" },
  // right post
  { fill: mid, points: "761.5,305 772,299 772,439 761.5,433" },
  { fill: dark, points: "772,299 783,293 783,433 772,439" },
  // upper front right
  { fill: light, points: "646.5,352.5 773,277.5 783,284.5 655,358.5" },
  { fill: dark, points: "655,358.5 783,284.5 783,297 654,371" },
  // left post
  { fill: mid, points: "503.5,296.500 514,302 514,439 503.5,433" },
  { fill: dark, points: "514,300 525,305 525,433 514,439" },
  { fill: mid, points: "503.5,433 514,439 514,450.500 503.5,445" },
  { fill: mid, points: "503.5,283.5 514,290 514,302 503.5,296.500" },
  // lower right rail
  { fill: light, points: "772.5,439 783.5,432.5 1084,606 1072.5,613" },
  { fill: mid, points: "772.5,439 1072.5,613 1072.5,625.5 772.5,452" },
  // lower front cross member
  { fill: light, points: "654,496 762,432.5 772.5,439 654,507.5" },
  { fill: dark, points: "654,507.5 772.5,439 772.5,452 665,513.5" },
  // lower left rail
  { fill: light, points: "514,439 525,433 640,499 640,511.5" },
  { fill: mid, points: "514,439 637.5,510.5 637.5,522.5 514,450.5" },
  { fill: light, points: "643.5,513 654,507.5 944,675 933.5,681" },
  { fill: mid, points: "637.5,510 643.5,513 933.5,681 933.5,693.5 637.5,522.5" },
  // middle cross member
  { fill: light, points: "840,612 955.5,544.500 965.5,551 850,618.5" },
  { fill: dark, points: "850,618.5 965.5,551 965.5,563.5 856,626" },
  // right brace
  { fill: mid, points: "772.5,331.5 994,567 965.5,551 772.5,344" },
  { fill: light, points: "772.5,331.5 783.5,324.5 1003.5,561 994,567" },
  // front end
  { fill: light, points: "933.5,681 1062.5,606.5 1072.5,613 944,687" },
  { fill: dark, points: "944,687 1072.5,613 1072.5,625.5 944,699.500" },
  { fill: dark, points: "1072.5,613 1084,606 1084,619 1072.5,625.5" },
  { fill: mid, points: "933.5,681 944,687 944,699.500 933.5,693.5" },
  // front post
  { fill: mid, points: "632.5,371 643.5,377 643.5,513 632.5,507" },
  { fill: dark, points: "643.5,370 654,364 654,507 643.5,513" },
  // left brace
  { fill: mid, points: "643.5,405 864,641 837,624.5 643.5,418.5" },
  { fill: light, points: "643.5,405 654.500,398.5 874,635 864,641" },
  // upper front left
  { fill: light, points: "514,290 525,284 655,358 643,364.5" },
  { fill: mid, points: "514,290 643,364.5 643,377 514,302" },
];

function Axis({ x, y }: { x: number; y: number }) {
  return (
    <g transform={`translate(${x} ${y})`}>
      <path d="M0 0V-16" stroke="#1b1bc4" strokeWidth="3" />
      <path d="M-4 -14L0 -23L4 -14z" fill="#1b1bc4" />
      <path d="M0 0L15 -8" stroke="#19d219" strokeWidth="3" />
      <path d="M11 -11L22 -12L15 -3z" fill="#19d219" />
      <path d="M0 0L14 8" stroke="#d2141e" strokeWidth="3" />
      <path d="M15 3L21 12L10 11z" fill="#d2141e" />
    </g>
  );
}

function Model() {
  return (
    <svg viewBox="260 195 1093 523" className="absolute inset-0 h-full w-full" role="img" aria-label="weld.Z3">
      <g stroke="#1d262c" strokeWidth="1" strokeLinejoin="round">
        {faces.map((face) => (
          <polygon key={face.points} points={face.points} fill={face.fill} />
        ))}
      </g>
      <polygon
        points="643,364.5 654,358.500 654,371 643,377"
        fill="#6f6b1c"
        stroke="#e6f20c"
        strokeWidth="2"
        strokeLinejoin="round"
      />

      {/* Datum planes */}
      <g strokeWidth="1">
        <polygon points="543.5,228 578.5,208 614,228 578.5,248" fill="#9a8fd8" fillOpacity="0.250" stroke="#3a35c8" />
        <path d="M561 257V217L596 197V235" fill="#d88a9a" fillOpacity="0.200" stroke="#d84050" />
        <path d="M561 237V197L596 218V258L580 249" fill="none" stroke="#37dc4a" />
        <polygon points="584,245 596,238 596,258" fill="#2f9a48" fillOpacity="0.350" />
      </g>
      <Axis x={578} y={228} />
      <Axis x={308} y={670} />
      <g fontSize="13" textAnchor="middle">
        <text x="604" y="218" fill="#37d83c">
          Y
        </text>
        <text x="604" y="248" fill="#d2141e">
          X
        </text>
        <text x="577" y="211" fill="#2a2ac8">
          Z
        </text>
        <text x="308" y="644" fill="#2a2ac8">
          Z
        </text>
        <text x="334" y="659" fill="#37e04a">
          Y
        </text>
        <text x="334" y="689" fill="#d2141e">
          X
        </text>
      </g>
    </svg>
  );
}

function DocumentTabs() {
  return (
    <div className="flex h-[19px] shrink-0 items-stretch border-b border-[#bcbcc3] text-[#2c2e33]">
      <button type="button" className="ml-4 flex items-center gap-2 px-3 whitespace-nowrap">
        零件002.Z3 - [3D草图4]
        <TabClose />
      </button>
      <button type="button" className="ml-3.5 flex items-center gap-2.5 px-3.5 whitespace-nowrap">
        Weldments.Z3 - [Weldment]
        <TabClose />
      </button>
      <button
        type="button"
        className="-mb-px ml-0.5 flex items-center gap-2 border-x border-t border-[#c6c6cc] bg-[#e9e9e9] px-2 whitespace-nowrap"
      >
        <svg viewBox="0 0 8 8" className="h-2 w-2" aria-hidden="true">
          <path d="M4 0v8M0 4h8" stroke="#77704f" strokeWidth="1.500" />
        </svg>
        weld.Z3 - [零件002]
        <TabClose />
      </button>
      <button type="button" aria-label="新建" className="flex items-center px-2">
        <svg viewBox="0 0 8 8" className="h-2 w-2" aria-hidden="true">
          <path d="M4 0v8M0 4h8" stroke="#88898f" strokeWidth="1.200" />
        </svg>
      </button>
      <button type="button" aria-label="列表" className="mr-1.5 ml-auto flex items-center">
        <svg viewBox="0 0 8 8" className="h-2 w-2" aria-hidden="true">
          <path d="M1 1h6M1.500 3.500h5L4 6.500z" fill="#eee" stroke="#808188" />
        </svg>
      </button>
    </div>
  );
}

function TabClose() {
  return (
    <svg viewBox="0 0 9 9" className="h-[9px] w-[9px]" aria-hidden="true">
      <path d="M1 1l7 7M8 1L1 8" stroke="#86805f" strokeWidth="1.500" />
    </svg>
  );
}

function Viewport() {
  return (
    <main className="flex min-w-0 flex-1 flex-col">
      <DocumentTabs />
      <div className="relative min-h-0 flex-1 bg-[#e9e9e9]">
        <Model />
        <div className="absolute inset-x-0 top-0.5 flex h-5 items-center justify-center gap-1.5 text-[#2c2e33]">
          {viewTools.map((tool) => (
            <button key={tool.icon} type="button" aria-label={tool.icon} className="flex items-center gap-1">
              <Icon name={tool.icon} />
              {tool.more && <Caret />}
            </button>
          ))}
          <div className="flex h-[19px] items-center border border-[#bfbfc6] pl-0.5">
            <Icon name="bulb" className="h-3.5 w-3.5" />
            <Icon name="layerDot" className="h-3.5 w-3.5" />
            <Dropdown label="图层" value="图层0000" className="h-[17px] w-[67px] border-none" />
          </div>
        </div>
        <p className="absolute bottom-[3px] left-1 text-[15px] leading-4 text-[#18191b]">3429.27 mm</p>
      </div>
    </main>
  );
}

function StatusBar() {
  return (
    <footer className="flex h-[26px] shrink-0 items-center border-t border-[#bcbcc3] pr-px pl-[5px] text-[#4b4d52]">
      <p className="flex-1">选择命令或实体</p>
      <span className="h-full w-px bg-[#b9b9c0]" />
      <IconButton name="textPanel" className="ml-1.5 h-[19px] w-5 border border-[#d2ae48] bg-[#f0dd7c]" />
      <IconButton name="panel" className="mx-1.5" />
      <input aria-label="命令" className="ml-0.5 h-[19px] w-[292px] border border-[#c3c3c9] bg-[#ebebeb] px-1 outline-none" />
    </footer>
  );
}

export default function App() {
  return (
    <div className="h-screen bg-[#111] px-[13px] py-6 font-['Noto_Sans','Noto_Sans_CJK_SC',sans-serif] text-[10px] leading-[14px]">
      <div className="flex h-full flex-col overflow-hidden bg-[#d4d4d8]">
        <MenuBar />
        <RibbonTabs />
        <Ribbon />
        <SelectionBar />
        <div className="flex min-h-0 flex-1">
          <Manager />
          <Viewport />
        </div>
        <StatusBar />
      </div>
    </div>
  );
}
